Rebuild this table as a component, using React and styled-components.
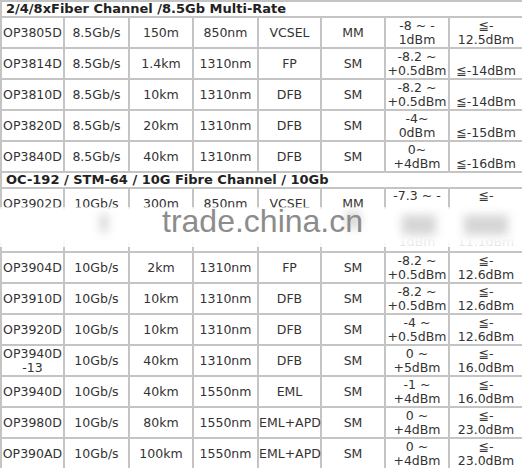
import React from "react";
import styled, { createGlobalStyle } from "styled-components";

const GlobalStyle = createGlobalStyle`
  body {
    margin: 0;
    background: #ffffff;
  }
`;

const LE = "\u2266";

const sections = [
  {
    title: "2/4/8xFiber Channel /8.5Gb Multi-Rate",
    rows: [
      ["OP3805D", "8.5Gb/s", "150m", "850nm", "VCSEL", "MM", ["-8 ~ -", "1dBm"], [LE + "-", "12.5dBm"]],
      ["OP3814D", "8.5Gb/s", "1.4km", "1310nm", "FP", "SM", ["-8.2 ~", "+0.5dBm"], ["", LE + "-14dBm"]],
      ["OP3810D", "8.5Gb/s", "10km", "1310nm", "DFB", "SM", ["-8.2 ~", "+0.5dBm"], ["", LE + "-14dBm"]],
      ["OP3820D", "8.5Gb/s", "20km", "1310nm", "DFB", "SM", ["-4~", "0dBm"], ["", LE + "-15dBm"]],
      ["OP3840D", "8.5Gb/s", "40km", "1310nm", "DFB", "SM", ["0~", "+4dBm"], ["", LE + "-16dBm"]],
    ],
  },
  {
    title: "OC-192 / STM-64 / 10G Fibre Channel / 10Gb",
    tall: ["OP3902D", "10Gb/s", "300m", "850nm", "VCSEL", "MM", ["-7.3 ~ -", "1dBm"], [LE + "-", "11.1dBm"]],
    rows: [
      ["OP3904D", "10Gb/s", "2km", "1310nm", "FP", "SM", ["-8.2 ~", "+0.5dBm"], [LE + "-", "12.6dBm"]],
      ["OP3910D", "10Gb/s", "10km", "1310nm", "DFB", "SM", ["-8.2 ~", "+0.5dBm"], [LE + "-", "12.6dBm"]],
      ["OP3920D", "10Gb/s", "10km", "1310nm", "DFB", "SM", ["-4 ~", "+0.5dBm"], [LE + "-", "12.6dBm"]],
      [["OP3940D", "-13"], "10Gb/s", "40km", "1310nm", "DFB", "SM", ["0 ~", "+5dBm"], [LE + "-", "16.0dBm"]],
      ["OP3940D", "10Gb/s", "40km", "1550nm", "EML", "SM", ["-1 ~", "+4dBm"], [LE + "-", "16.0dBm"]],
      ["OP3980D", "10Gb/s", "80km", "1550nm", "EML+APD", "SM", ["0 ~", "+4dBm"], [LE + "-", "23.0dBm"]],
      ["OP390AD", "10Gb/s", "100km", "1550nm", "EML+APD", "SM", ["0 ~", "+4dBm"], [LE + "-", "23.0dBm"]],
    ],
  },
];

const widths = [63, 65, 64, 65, 63, 64, 64, 74];

// blurred leftovers of the covered row inside the watermark strip
const smudges = [
  { top: 214, left: 100, w: 8, h: 18 },
  { top: 212, left: 346, w: 14, h: 16 },
  { top: 215, left: 402, w: 34, h: 20 },
  { top: 215, left: 464, w: 44, h: 20 },
];

const Page = styled.div`
  position: relative;
  width: 522px;
  height: 468px;
  overflow: hidden;
`;

const Table = styled.table`
  border-collapse: collapse;
  table-layout: fixed;
  width: 522px;
  font-family: "DejaVu Sans", Verdana, "Noto Sans CJK SC", sans-serif;
  font-size: 12.5px;
  color: #333333;
`;

const Head = styled.td`
  border: 2px solid #c4c4c4;
  padding: 0 0 0 4px;
  height: 14px;
  line-height: 14px;
  font-size: 13px;
  font-weight: bold;
  color: #222222;
  text-align: left;
  white-space: nowrap;
`;

const Cell = styled.td`
  border: 2px solid #c4c4c4;
  border-bottom-style: ${(p) => (p.$last ? "dashed" : "solid")};
  padding: ${(p) => (p.$tall ? "8px 0 0" : "0")};
  height: ${(p) => (p.$tall ? "54px" : "29px")};
  line-height: 14px;
  text-align: center;
  vertical-align: ${(p) => p.$valign || "middle"};
  white-space: nowrap;
`;

const Split = styled.div`
  display: flex;
  flex-direction: column;
  justify-content: space-between;
  height: 60px;
`;

const Band = styled.div`
  position: absolute;
  left: 0;
  right: 0;
  top: 207px;
  height: 40px;
  background: linear-gradient(
    to bottom,
    rgba(255, 255, 255, 0.6) 0px,
    #ffffff 3px,
    #ffffff 30px,
    rgba(255, 255, 255, 0.85) 40px
  );
`;

const Smudge = styled.span`
  position: absolute;
  top: ${(p) => p.$top}px;
  left: ${(p) => p.$left}px;
  width: ${(p) => p.$w}px;
  height: ${(p) => p.$h}px;
  background: #777777;
  opacity: 0.3;
  filter: blur(5px);
`;

const Mark = styled.div`
  position: absolute;
  top: 201px;
  left: 162px;
  font-family: "Liberation Sans", Arial, sans-serif;
  font-size: 32px;
  line-height: 40px;
  color: #8c8c8c;
`;

const lines = (v) =>
  Array.isArray(v)
    ? v.map((t, i) => (
        <React.Fragment key={i}>
          {i > 0 && <br />}
          {t || "\u00a0"}
        </React.Fragment>
      ))
    : v;

const App = () => {
  const total = sections[1].rows.length;
  return (
    <Page>
      <GlobalStyle />
      <Table>
        <colgroup>
          {widths.map((w, i) => (
            <col key={i} style={{ width: w }} />
          ))}
        </colgroup>
        <tbody>
          {sections.map((s, si) => (
            <React.Fragment key={si}>
              <tr>
                <Head colSpan={8}>{s.title}</Head>
              </tr>
              {s.tall && (
                <tr>
                  {s.tall.map((v, i) =>
                    i < 6 ? (
                      <Cell key={i} $tall $valign="top">
                        {v}
                      </Cell>
                    ) : (
                      <Cell key={i} $valign="top" style={{ height: 60 }}>
                        <Split>
                          <span>{v[0]}</span>
                          <span>{v[1]}</span>
                        </Split>
                      </Cell>
                    )
                  )}
                </tr>
              )}
              {s.rows.map((r, ri) => (
                <tr key={ri}>
                  {r.map((v, i) => (
                    <Cell
                      key={i}
                      $last={si === 1 && ri === total - 1}
                      $valign={i === 7 && v[0] === "" ? "bottom" : "middle"}
                    >
                      {lines(i === 7 && v[0] === "" ? v[1] : v)}
                    </Cell>
                  ))}
                </tr>
              ))}
            </React.Fragment>
          ))}
        </tbody>
      </Table>
      <Band />
      {smudges.map((m, i) => (
        <Smudge key={i} $top={m.top} $left={m.left} $w={m.w} $h={m.h} />
      ))}
      <Mark>trade.china.cn</Mark>
    </Page>
  );
};

export default App;
